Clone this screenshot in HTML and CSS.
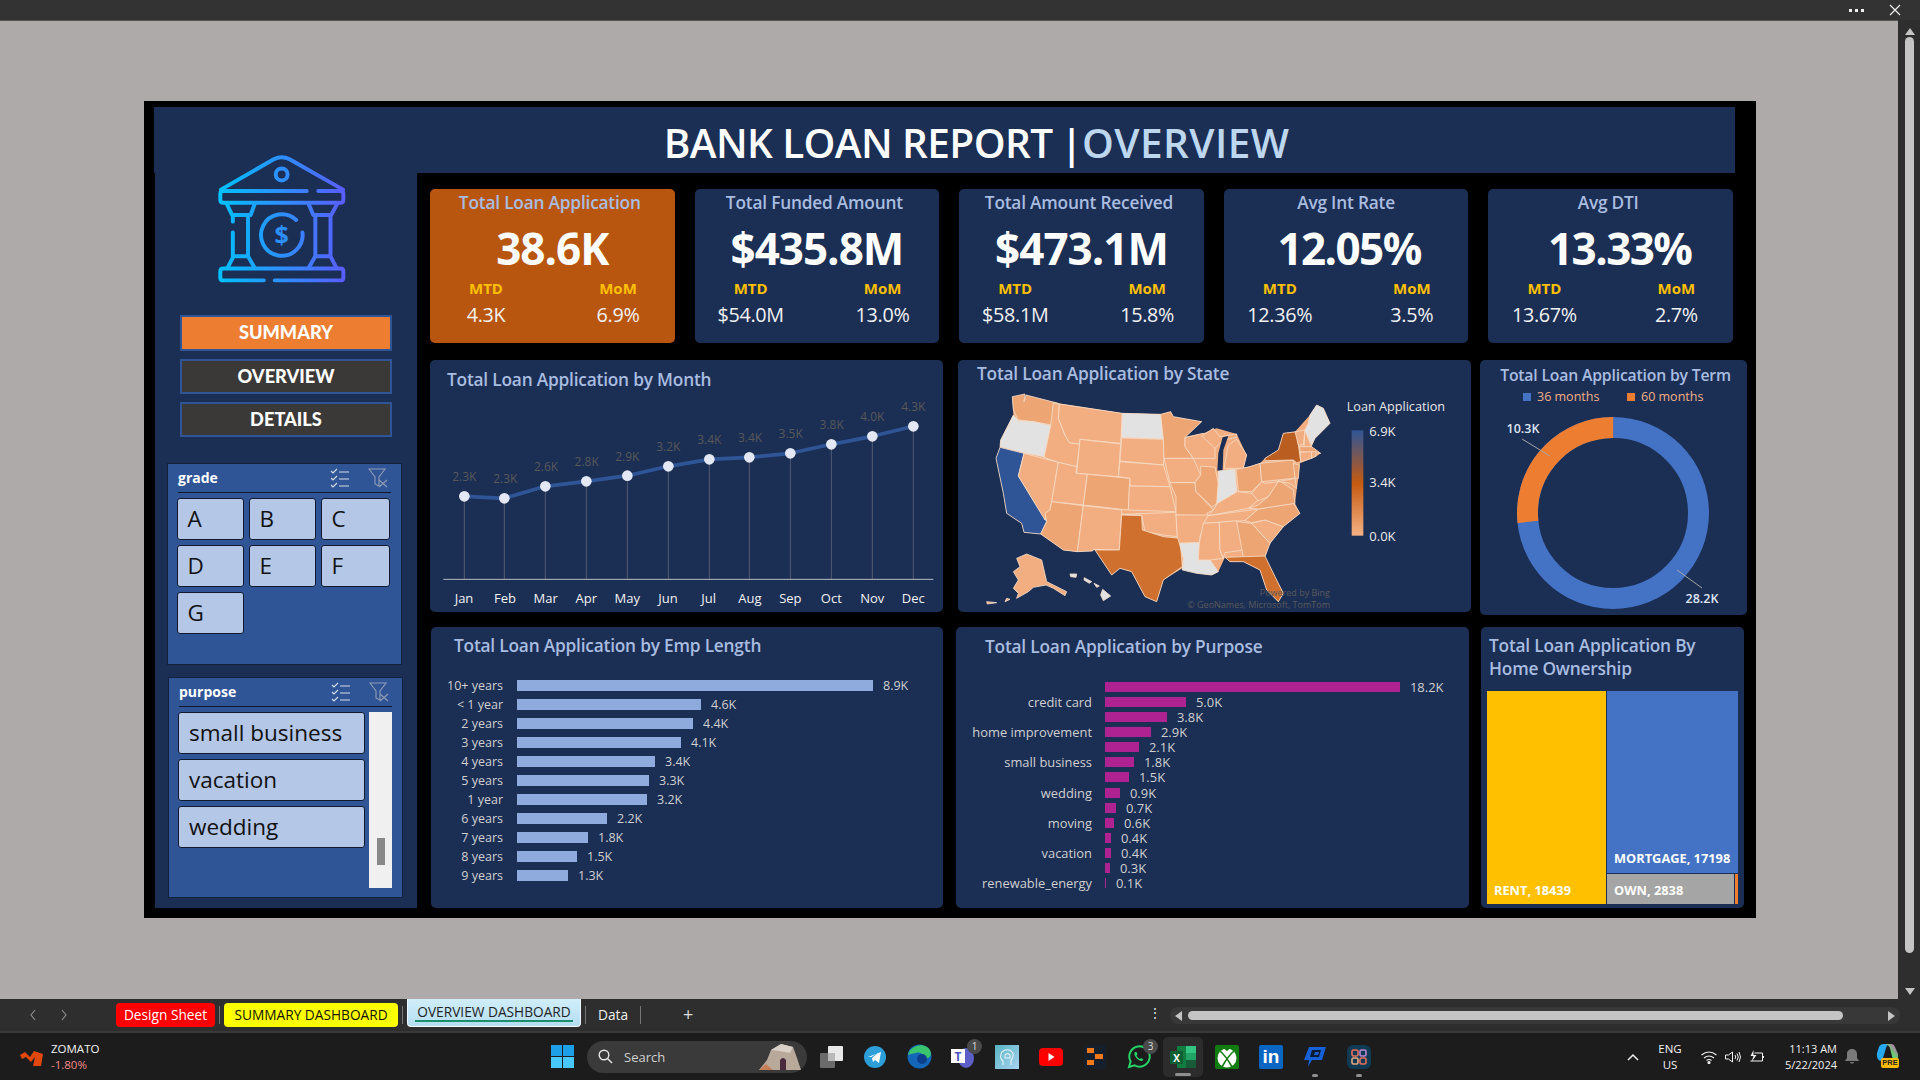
FILE: index.html
```html
<!DOCTYPE html>
<html lang="en">
<head>
  <meta charset="UTF-8">
  <title>Bank Loan Report - Overview</title>
  <link rel="stylesheet" href="styles.css">
</head>
<body>
<div class="app">
  <div class="topbar">
    <span class="dots"><i></i><i></i><i></i></span>
    <svg class="close" width="12" height="12" viewBox="0 0 12 12"><path d="M1 1l10 10M11 1L1 11" stroke="#f0f0f0" stroke-width="1.2"/></svg>
  </div>

  <div class="sheet">
    <div class="canvas">
      <div class="dash">
        <div class="header">BANK LOAN REPORT <span class="pipe">|</span><span class="hl">OVERVIEW</span></div>
        <div class="body">
          <aside class="sidebar">
            <svg class="logo" width="130" height="130" viewBox="228 160 394 394" fill="none" stroke="url(#logoGrad)" stroke-width="12" stroke-linecap="round" stroke-linejoin="round">
              <defs>
                <linearGradient id="logoGrad" gradientUnits="userSpaceOnUse" x1="232" y1="0" x2="618" y2="0">
                  <stop offset="0" stop-color="#00c2ff"/>
                  <stop offset="1" stop-color="#5a5cff"/>
                </linearGradient>
              </defs>
              <path d="M240 268L400 176Q424 164 448 176L610 268"/>
              <circle cx="424" cy="222" r="18"/>
              <path d="M500 272H247q-9 0-9 9v18q0 9 9 9H602q9 0 9-9v-18q0-9-9-9H535"/>
              <path d="M258 312L274 345H330L342 312M276 345V365M276 398V470M322 345V470M278 470L260 505M322 470L342 505M278 470H322"/>
              <path d="M592 312L574 345H520L506 312M572 345V470M526 345V470M572 470L590 505M526 470L506 505M526 470H572"/>
              <path d="M370 543H247q-9 0-9-9v-18q0-9 9-9H602q9 0 9 9v18q0 9-9 9H403"/>
              <path d="M468 360A63 63 0 1 0 487 398"/>
              <text class="logo-dollar" x="424" y="434" text-anchor="middle" stroke="none" fill="url(#logoGrad)">$</text>
            </svg>

            <div class="nav-btn nav-on">SUMMARY</div>
            <div class="nav-btn">OVERVIEW</div>
            <div class="nav-btn">DETAILS</div>

            <div class="slicer slicer-grade">
              <div class="slicer-head">
                <span class="slicer-title">grade</span>
                <svg class="ico-multi" width="20" height="20" viewBox="0 0 20 20" fill="none" stroke="#d5dbe8" stroke-width="1.1"><path d="M1 3l2 2 4-4M1 10l2 2 4-4M1 17l2 2 4-4M9 4h10M9 11h10M9 18h10"/></svg>
                <svg class="ico-filter" width="20" height="20" viewBox="0 0 20 20" fill="none" stroke="#8f9bb3" stroke-width="1.1"><path d="M1 1h16l-6 8v9l-4-2V9z"/><path d="M11 12l8 7M19 12l-8 7"/></svg>
              </div>
              <div class="grade-grid">
                <div class="chip">A</div><div class="chip">B</div><div class="chip">C</div>
                <div class="chip">D</div><div class="chip">E</div><div class="chip">F</div>
                <div class="chip">G</div>
              </div>
            </div>

            <div class="slicer slicer-purpose">
              <div class="slicer-head">
                <span class="slicer-title">purpose</span>
                <svg class="ico-multi" width="20" height="20" viewBox="0 0 20 20" fill="none" stroke="#d5dbe8" stroke-width="1.1"><path d="M1 3l2 2 4-4M1 10l2 2 4-4M1 17l2 2 4-4M9 4h10M9 11h10M9 18h10"/></svg>
                <svg class="ico-filter" width="20" height="20" viewBox="0 0 20 20" fill="none" stroke="#8f9bb3" stroke-width="1.1"><path d="M1 1h16l-6 8v9l-4-2V9z"/><path d="M11 12l8 7M19 12l-8 7"/></svg>
              </div>
              <div class="purpose-list">
                <div class="purpose-items">
                  <div class="chip">small business</div>
                  <div class="chip">vacation</div>
                  <div class="chip">wedding</div>
                </div>
                <div class="slicer-scroll"><div class="slicer-thumb"></div></div>
              </div>
            </div>
          </aside>

          <main class="main">
            <section class="kpis">
              <div class="kpi kpi-on">
                <div class="kpi-title kpi-shift">Total Loan Application</div>
                <div class="kpi-big">38.6K</div>
                <div class="kpi-sub"><b>MTD</b><b>MoM</b><span>4.3K</span><span>6.9%</span></div>
              </div>
              <div class="kpi">
                <div class="kpi-title kpi-shift">Total Funded Amount</div>
                <div class="kpi-big">$435.8M</div>
                <div class="kpi-sub"><b>MTD</b><b>MoM</b><span>$54.0M</span><span>13.0%</span></div>
              </div>
              <div class="kpi">
                <div class="kpi-title kpi-shift">Total Amount Received</div>
                <div class="kpi-big">$473.1M</div>
                <div class="kpi-sub"><b>MTD</b><b>MoM</b><span>$58.1M</span><span>15.8%</span></div>
              </div>
              <div class="kpi">
                <div class="kpi-title">Avg Int Rate</div>
                <div class="kpi-big kpi-big-r">12.05%</div>
                <div class="kpi-sub"><b>MTD</b><b>MoM</b><span>12.36%</span><span>3.5%</span></div>
              </div>
              <div class="kpi">
                <div class="kpi-title kpi-shift">Avg DTI</div>
                <div class="kpi-big kpi-big-rr">13.33%</div>
                <div class="kpi-sub"><b>MTD</b><b>MoM</b><span>13.67%</span><span>2.7%</span></div>
              </div>
            </section>

            <section class="row row-mid">
              <div class="panel panel-month">
                <h3 class="panel-title">Total Loan Application by Month</h3>
                <svg class="line-chart" width="513" height="220" viewBox="0 96 1539 660">
                  <g class="drops">
                    <path d="M103 409V658M223 415V658M346 379V658M469 364V658M592 347V658M715 319V658M838 298V658M958 292V658M1081 280V658M1204 253V658M1327 229V658M1450 199V658"/>
                  </g>
                  <path class="axis" d="M40 658H1510"/>
                  <polyline class="trend" points="103,409 223,415 346,379 469,364 592,347 715,319 838,298 958,292 1081,280 1204,253 1327,229 1450,199"/>
                  <g class="marks">
                    <circle cx="103" cy="409" r="16"/><circle cx="223" cy="415" r="16"/><circle cx="346" cy="379" r="16"/><circle cx="469" cy="364" r="16"/><circle cx="592" cy="347" r="16"/><circle cx="715" cy="319" r="16"/><circle cx="838" cy="298" r="16"/><circle cx="958" cy="292" r="16"/><circle cx="1081" cy="280" r="16"/><circle cx="1204" cy="253" r="16"/><circle cx="1327" cy="229" r="16"/><circle cx="1450" cy="199" r="16"/>
                  </g>
                  <g class="pt-labels">
                    <text x="103" y="364">2.3K</text><text x="226" y="370">2.3K</text><text x="348" y="334">2.6K</text><text x="470" y="319">2.8K</text><text x="592" y="304">2.9K</text><text x="715" y="274">3.2K</text><text x="838" y="253">3.4K</text><text x="960" y="247">3.4K</text><text x="1082" y="235">3.5K</text><text x="1205" y="208">3.8K</text><text x="1327" y="184">4.0K</text><text x="1450" y="154">4.3K</text>
                  </g>
                  <g class="months">
                    <text x="102" y="728">Jan</text><text x="225" y="728">Feb</text><text x="347" y="728">Mar</text><text x="469" y="728">Apr</text><text x="592" y="728">May</text><text x="714" y="728">Jun</text><text x="836" y="728">Jul</text><text x="960" y="728">Aug</text><text x="1081" y="728">Sep</text><text x="1204" y="728">Oct</text><text x="1327" y="728">Nov</text><text x="1450" y="728">Dec</text>
                  </g>
                </svg>
              </div>

              <div class="panel panel-map">
                <h3 class="panel-title">Total Loan Application by State</h3>
                <svg class="map" width="512" height="226" viewBox="24 108 1536 678">
                  <defs>
                    <linearGradient id="legendGrad" x1="0" y1="0" x2="0" y2="1">
                      <stop offset="0" stop-color="#2f5597"/>
                      <stop offset="0.5" stop-color="#c55a11"/>
                      <stop offset="1" stop-color="#f4b183"/>
                    </linearGradient>
                  </defs>
                  <polygon class="st-a" points="187,140 325,160 517,190 632,193 662,185 670,200 755,215 705,262 760,250 800,235 860,252 890,315 880,355 930,340 945,325 985,300 1000,250 1035,245 1080,195 1100,165 1120,175 1140,220 1095,265 1085,290 1112,310 1098,320 1050,340 1045,385 1040,420 1035,460 1050,490 1000,530 960,580 945,620 975,680 1000,730 985,755 950,720 930,660 880,635 840,635 825,622 805,665 785,675 740,670 697,655 640,690 620,755 585,740 545,665 510,655 485,675 435,600 382,605 340,600 272,552 222,547 215,520 170,490 160,430 138,325 150,290 152,270 190,195"/>
                  <g class="states">
                    <polygon class="st-b" points="187,140 225,132 222,155 228,135 325,160 305,225 250,215 205,210 190,180"/>
                    <polygon class="st-n" points="190,195 205,212 250,215 305,228 282,320 220,308 150,290 152,270"/>
                    <polygon class="st-ca" points="150,292 222,310 205,378 290,515 272,552 222,547 215,520 170,490 160,430 138,325"/>
                    <polygon class="st-a" points="222,310 325,337 305,455 300,480 288,490 285,510 205,378"/>
                    <polygon class="st-a" points="310,158 328,162 325,205 345,255 358,278 390,282 380,350 325,337 282,322 302,228"/>
                    <polygon class="st-a" points="328,162 517,190 512,280 390,268 388,282 358,278 345,255 325,205"/>
                    <polygon class="st-a" points="390,268 512,282 505,380 380,370"/>
                    <polygon class="st-a" points="325,337 380,350 378,370 412,373 400,465 305,455"/>
                    <polygon class="st-b" points="412,373 540,385 535,480 400,465"/>
                    <polygon class="st-b" points="305,455 400,467 382,605 340,600 272,552 290,515 285,490 300,480"/>
                    <polygon class="st-a" points="400,467 515,480 508,600 430,598 428,603 382,605"/>
                    <polygon class="st-n" points="517,190 632,193 640,267 515,262"/>
                    <polygon class="st-a" points="515,264 640,268 642,325 640,345 510,333"/>
                    <polygon class="st-a" points="510,335 640,345 660,410 540,408 540,385 505,380"/>
                    <polygon class="st-a" points="538,408 660,410 678,485 535,480"/>
                    <polygon class="st-a" points="515,493 678,487 682,560 640,555 585,545 575,495"/>
                    <polygon class="st-tx" points="515,495 575,497 577,540 640,560 690,565 697,650 640,690 620,755 585,740 545,665 510,655 485,675 435,600 508,600"/>
                    <polygon class="st-b" points="632,193 662,185 670,200 755,215 705,262 705,290 730,325 642,325 640,267"/>
                    <polygon class="st-a" points="642,325 730,325 752,375 735,398 660,398"/>
                    <polygon class="st-b" points="660,398 735,398 738,425 790,480 770,490 775,497 678,495 678,440"/>
                    <polygon class="st-a" points="678,495 775,495 750,560 748,578 688,580 682,560"/>
                    <polygon class="st-n" points="688,580 748,578 745,630 780,630 805,665 785,675 740,670 697,660 700,625"/>
                    <polygon class="st-a" points="705,262 760,250 795,280 795,325 730,325 705,290"/>
                    <polygon class="st-b" points="752,348 795,352 805,400 802,460 785,470 738,425 735,398 752,375"/>
                    <polygon class="st-n" points="805,362 855,358 860,425 800,462 805,400"/>
                    <polygon class="st-a" points="822,355 835,285 860,268 890,315 880,355"/>
                    <polygon class="st-a" points="755,258 790,235 810,260 860,252 860,262 820,270 795,295"/>
                    <polygon class="st-b" points="858,358 900,350 930,340 935,395 905,425 865,425"/>
                    <polygon class="st-a" points="802,460 862,425 905,430 925,450 895,475 775,497 790,480"/>
                    <polygon class="st-a" points="775,497 925,477 910,490 885,512 760,520"/>
                    <polygon class="st-a" points="760,520 808,517 810,600 820,625 780,630 745,630 748,578"/>
                    <polygon class="st-a" points="808,517 860,512 880,600 825,608 820,625 810,600"/>
                    <polygon class="st-b" points="860,514 885,518 905,520 960,580 945,620 880,622"/>
                    <polygon class="st-tx" points="825,622 945,618 975,680 1000,730 985,755 950,720 930,660 880,635 840,635"/>
                    <polygon class="st-a" points="905,520 945,510 1000,530 960,580"/>
                    <polygon class="st-b" points="885,512 925,477 1030,460 1050,490 1000,530 945,510 905,518"/>
                    <polygon class="st-b" points="895,475 925,465 955,440 985,390 1030,420 1035,460 925,477"/>
                    <polygon class="st-a" points="905,430 935,395 945,400 985,395 955,440 925,452"/>
                    <polygon class="st-b" points="930,340 1030,330 1040,375 1030,385 935,395"/>
                    <polygon class="st-ny" points="945,325 985,300 1000,250 1040,245 1052,335 1040,338 1030,330 945,332"/>
                    <polygon class="st-b" points="1030,340 1048,345 1045,385 1035,385"/>
                    <polygon class="st-a" points="985,395 1035,385 1040,415 1020,400"/>
                    <polygon class="st-a" points="1035,245 1065,240 1060,285 1045,285"/>
                    <polygon class="st-a" points="1065,240 1080,280 1085,290 1062,295"/>
                    <polygon class="st-n" points="1080,195 1100,165 1120,175 1140,220 1095,265 1085,285 1065,240 1075,220"/>
                    <polygon class="st-b" points="1048,290 1085,290 1112,310 1050,305"/>
                    <polygon class="st-a" points="1050,307 1085,305 1085,325 1052,335"/>
                    <polygon class="st-a" points="1085,305 1098,305 1098,318 1085,325"/>
                    <polygon class="st-a" points="200,625 230,612 275,630 290,695 310,705 350,725 345,737 310,715 288,705 250,712 235,725 200,745 205,730 190,715 205,690 190,665 210,650"/>
                    <polygon class="st-a" points="170,745 180,748 165,755"/>
                    <polygon class="st-a" points="110,755 140,758 112,762"/>
                    <polygon class="st-n" points="360,672 380,672 378,682 362,680"/>
                    <polygon class="st-n" points="403,683 425,695 418,700 402,690"/>
                    <polygon class="st-n" points="432,700 448,708 440,712"/>
                    <polygon class="st-n" points="458,718 482,738 460,752 452,735"/>
                  </g>
                  <polygon class="lake" points="818,262 835,258 820,300 818,360 802,362 805,310"/>
                  <text class="map-credit" x="1140" y="738">Powered by Bing</text>
                  <text class="map-credit" x="1140" y="773">© GeoNames, Microsoft, TomTom</text>
                  <text class="legend-title" x="1190" y="184">Loan Application</text>
                  <rect x="1205" y="241" width="35" height="316" fill="url(#legendGrad)"/>
                  <text class="legend-val" x="1258" y="258">6.9K</text>
                  <text class="legend-val" x="1258" y="412">3.4K</text>
                  <text class="legend-val" x="1258" y="572">0.0K</text>
                </svg>
              </div>

              <div class="panel panel-term">
                <h3 class="panel-title">Total Loan Application by Term</h3>
                <div class="term-legend">
                  <span class="term-key"><i class="sq-blue"></i>36 months</span>
                  <span class="term-key"><i class="sq-orange"></i>60 months</span>
                </div>
                <svg class="donut" width="267" height="209" viewBox="0 46 267 209">
                  <circle cx="133" cy="153" r="85.5" fill="none" stroke="#4472c4" stroke-width="21"/>
                  <circle cx="133" cy="153" r="85.5" fill="none" stroke="#ed7d31" stroke-width="21" stroke-dasharray="143.3 537.2" transform="rotate(174 133 153)"/>
                  <path class="leader" d="M42 79L70 96M197 210L222 228"/>
                  <text class="donut-val" x="43" y="73">10.3K</text>
                  <text class="donut-val" x="222" y="243">28.2K</text>
                </svg>
              </div>
            </section>

            <section class="row row-low">
              <div class="panel panel-emp">
                <h3 class="panel-title">Total Loan Application by Emp Length</h3>
                <div class="bars bars-emp">
                  <div class="bar-row"><span class="bar-name">10+ years</span><i class="bar" style="width:356px"></i><span class="bar-val">8.9K</span></div>
                  <div class="bar-row"><span class="bar-name">&lt; 1 year</span><i class="bar" style="width:184px"></i><span class="bar-val">4.6K</span></div>
                  <div class="bar-row"><span class="bar-name">2 years</span><i class="bar" style="width:176px"></i><span class="bar-val">4.4K</span></div>
                  <div class="bar-row"><span class="bar-name">3 years</span><i class="bar" style="width:164px"></i><span class="bar-val">4.1K</span></div>
                  <div class="bar-row"><span class="bar-name">4 years</span><i class="bar" style="width:138px"></i><span class="bar-val">3.4K</span></div>
                  <div class="bar-row"><span class="bar-name">5 years</span><i class="bar" style="width:132px"></i><span class="bar-val">3.3K</span></div>
                  <div class="bar-row"><span class="bar-name">1 year</span><i class="bar" style="width:130px"></i><span class="bar-val">3.2K</span></div>
                  <div class="bar-row"><span class="bar-name">6 years</span><i class="bar" style="width:90px"></i><span class="bar-val">2.2K</span></div>
                  <div class="bar-row"><span class="bar-name">7 years</span><i class="bar" style="width:71px"></i><span class="bar-val">1.8K</span></div>
                  <div class="bar-row"><span class="bar-name">8 years</span><i class="bar" style="width:60px"></i><span class="bar-val">1.5K</span></div>
                  <div class="bar-row"><span class="bar-name">9 years</span><i class="bar" style="width:51px"></i><span class="bar-val">1.3K</span></div>
                </div>
              </div>

              <div class="panel panel-purpose">
                <h3 class="panel-title">Total Loan Application by Purpose</h3>
                <div class="bars bars-purpose">
                  <div class="bar-row"><span class="bar-name"></span><i class="bar" style="width:295px"></i><span class="bar-val">18.2K</span></div>
                  <div class="bar-row"><span class="bar-name">credit card</span><i class="bar" style="width:81px"></i><span class="bar-val">5.0K</span></div>
                  <div class="bar-row"><span class="bar-name"></span><i class="bar" style="width:62px"></i><span class="bar-val">3.8K</span></div>
                  <div class="bar-row"><span class="bar-name">home improvement</span><i class="bar" style="width:46px"></i><span class="bar-val">2.9K</span></div>
                  <div class="bar-row"><span class="bar-name"></span><i class="bar" style="width:34px"></i><span class="bar-val">2.1K</span></div>
                  <div class="bar-row"><span class="bar-name">small business</span><i class="bar" style="width:29px"></i><span class="bar-val">1.8K</span></div>
                  <div class="bar-row"><span class="bar-name"></span><i class="bar" style="width:24px"></i><span class="bar-val">1.5K</span></div>
                  <div class="bar-row"><span class="bar-name">wedding</span><i class="bar" style="width:15px"></i><span class="bar-val">0.9K</span></div>
                  <div class="bar-row"><span class="bar-name"></span><i class="bar" style="width:11px"></i><span class="bar-val">0.7K</span></div>
                  <div class="bar-row"><span class="bar-name">moving</span><i class="bar" style="width:9px"></i><span class="bar-val">0.6K</span></div>
                  <div class="bar-row"><span class="bar-name"></span><i class="bar" style="width:6px"></i><span class="bar-val">0.4K</span></div>
                  <div class="bar-row"><span class="bar-name">vacation</span><i class="bar" style="width:6px"></i><span class="bar-val">0.4K</span></div>
                  <div class="bar-row"><span class="bar-name"></span><i class="bar" style="width:5px"></i><span class="bar-val">0.3K</span></div>
                  <div class="bar-row"><span class="bar-name">renewable_energy</span><i class="bar" style="width:1px"></i><span class="bar-val">0.1K</span></div>
                </div>
              </div>

              <div class="panel panel-home">
                <h3 class="panel-title">Total Loan Application By<br>Home Ownership</h3>
                <div class="treemap">
                  <div class="tm-rent"><span>RENT, 18439</span></div>
                  <div class="tm-right">
                    <div class="tm-mortgage"><span>MORTGAGE, 17198</span></div>
                    <div class="tm-bottom">
                      <div class="tm-own"><span>OWN, 2838</span></div>
                      <div class="tm-other"></div>
                    </div>
                  </div>
                </div>
              </div>
            </section>
          </main>
        </div>
      </div>
    </div>

    <div class="vscroll">
      <span class="arrow-up"></span>
      <div class="vthumb"></div>
      <span class="arrow-down"></span>
    </div>
  </div>

  <div class="sheetbar">
    <svg class="tab-nav" width="90" height="24" viewBox="0 0 90 24" fill="none" stroke="#8a8a8a" stroke-width="1.2"><path d="M35 7l-4 5 4 5M62 7l4 5-4 5"/></svg>
    <div class="tab tab-red">Design Sheet</div>
    <span class="tab-sep"></span>
    <div class="tab tab-yellow">SUMMARY DASHBOARD</div>
    <span class="tab-sep"></span>
    <div class="tab tab-active">OVERVIEW DASHBOARD</div>
    <span class="tab-sep"></span>
    <div class="tab tab-plain">Data</div>
    <span class="tab-sep"></span>
    <div class="tab-plus">+</div>
    <div class="tab-more">⋮</div>
    <div class="hscroll">
      <span class="arrow-left"></span>
      <div class="hthumb"></div>
      <span class="arrow-right"></span>
    </div>
  </div>

  <div class="taskbar">
    <div class="stock">
      <svg width="24" height="20" viewBox="0 0 24 20"><path d="M0 8l5-3 5 5 4-6 9 3-2 12-8 0 2-9-4 5-5-5-4 2z" fill="#e2470c"/></svg>
      <div class="stock-text"><span>ZOMATO</span><span class="stock-down">-1.80%</span></div>
    </div>
    <div class="slot">
      <svg width="23" height="23" viewBox="0 0 23 23"><path fill="#1ea0e8" d="M0 0h11v11H0zM12 0h11v11H12z"/><path fill="#47c8f8" d="M0 12h11v11H0zM12 12h11v11H12z"/></svg>
    </div>
    <div class="search">
      <svg width="15" height="15" viewBox="0 0 15 15" fill="none" stroke="#e6e6e6" stroke-width="1.4"><circle cx="6" cy="6" r="4.8"/><path d="M9.5 9.5L14 14"/></svg>
      <span>Search</span>
      <svg class="search-art" width="44" height="30" viewBox="0 0 44 30"><path d="M2 28L10 18 14 8 24 2 36 5 40 16 44 28z" fill="#b9a99a"/><path d="M23 28V18q3-4 6 0V28z" fill="#4a2b3d"/><path d="M14 8L24 2 36 5 33 11 22 9z" fill="#d8cfc6"/><path d="M2 28L9 22 16 28z" fill="#c57f57"/></svg>
    </div>
    <div class="apps">
      <div class="slot"><svg width="24" height="24" viewBox="0 0 24 24"><rect x="9" y="1" width="15" height="15" rx="1" fill="#e8e8e8"/><rect x="1" y="8" width="15" height="15" rx="1" fill="#6b6b6b"/><rect x="9" y="8" width="7" height="8" fill="#b9b9b9"/></svg></div>
      <div class="slot"><svg width="22" height="22" viewBox="0 0 22 22"><circle cx="11" cy="11" r="11" fill="#2c9fd8"/><path d="M4 11l13-5-2 11-4-3-2 2-1-4 6-5-7 4z" fill="#fff"/></svg></div>
      <div class="slot"><svg width="25" height="25" viewBox="0 0 25 25"><circle cx="12.5" cy="12.5" r="12" fill="#1466b8"/><path d="M1 11C3 2 14-1 20 3c5 3 5 10 1 11-3 1-6 0-6-3 0-2-3-3-6-2-4 1-7 1-8 2z" fill="#39c46e"/><circle cx="15" cy="15" r="5" fill="#0e3f8c"/></svg></div>
      <div class="slot"><svg width="26" height="24" viewBox="0 0 26 24"><ellipse cx="16" cy="13" rx="8" ry="10" fill="#5b5fc7"/><rect x="1" y="4" width="14" height="14" fill="#fff"/><text class="icon-t" x="8" y="15.5">T</text></svg><span class="badge">1</span></div>
      <div class="slot"><svg width="24" height="24" viewBox="0 0 24 24"><defs><linearGradient id="appGrad" x1="0" y1="0" x2="1" y2="1"><stop offset="0" stop-color="#58b3c4"/><stop offset="1" stop-color="#a8d3f0"/></linearGradient></defs><rect width="24" height="24" fill="url(#appGrad)"/><path d="M8 20v-4c-3-2-3-6-1-9 3-3 8-3 10 0 2 3 1 6-1 8v5M10 10a3 3 0 0 1 5 0v3h-5z" fill="none" stroke="#e8f5fb" stroke-width="1.1"/></svg></div>
      <div class="slot"><svg width="24" height="18" viewBox="0 0 24 18"><rect width="24" height="18" rx="4" fill="#f00"/><path d="M9.5 5l6 4-6 4z" fill="#fff"/></svg></div>
      <div class="slot"><svg width="22" height="24" viewBox="0 0 22 24"><rect width="22" height="24" rx="3" fill="#16202c"/><path d="M3 3h7v5H3zM11 9h8v5h-8zM3 15h7v5H3z" fill="#f07a1a"/></svg></div>
      <div class="slot"><svg width="24" height="24" viewBox="0 0 24 24" fill="none"><path d="M2 22l1.6-5.6A10.2 10.2 0 1 1 7.6 20.4z" stroke="#25d366" stroke-width="2"/><path d="M8 7c-1 1-1 3 1 5.5s4.500 4 6 3.500l1.500-1.500-2.500-1.500-1 1c-1.500-.5-2.500-1.500-3.500-3.500l1-1-1-2.500z" fill="#25d366"/></svg><span class="badge">3</span></div>
      <div class="slot slot-on"><svg width="26" height="24" viewBox="0 0 26 24"><rect x="7" y="1" width="19" height="22" rx="1" fill="#107c41"/><rect x="16" y="1" width="10" height="7" fill="#33c481"/><rect x="16" y="8" width="10" height="7" fill="#21a366"/><rect x="16" y="15" width="10" height="8" fill="#185c37"/><rect y="6" width="13" height="13" rx="1" fill="#0c5f33"/><text class="icon-x" x="6.500" y="16.500">X</text></svg><i class="running"></i></div>
      <div class="slot"><svg width="24" height="24" viewBox="0 0 24 24"><rect width="24" height="24" rx="2" fill="#107c10"/><circle cx="12" cy="13" r="9.500" fill="#fff"/><path d="M5 6Q11 11 17 22M19 6Q13 11 7 22" fill="none" stroke="#107c10" stroke-width="1.600"/><path d="M7 2L12 6 17 2z" fill="#107c10"/></svg></div>
      <div class="slot"><div class="linkedin">in</div></div>
      <div class="slot"><svg width="24" height="22" viewBox="0 0 24 22"><path d="M6 1h17l-4 13H9l-4 7 1-7H1z" fill="#1660d8"/><path d="M9 4h9l-2 7H7z" fill="#0a1a33"/><path d="M12 6h4l-1 3h-4z" fill="#1660d8"/></svg><i class="running-dot"></i></div>
      <div class="slot"><svg width="24" height="24" viewBox="0 0 24 24" fill="none" stroke-width="1.600"><rect width="24" height="24" rx="6" fill="#0f3a52"/><rect x="5" y="5" width="6" height="6" rx="1.500" stroke="#e96f5c"/><rect x="13" y="5" width="6" height="6" rx="1.500" stroke="#b88ad8"/><rect x="5" y="13" width="6" height="6" rx="1.500" stroke="#e6a884"/><rect x="13" y="13" width="6" height="6" rx="1.500" stroke="#e96f5c"/></svg><i class="running-dot"></i></div>
    </div>
    <div class="tray">
      <svg class="tray-chev" width="12" height="8" viewBox="0 0 12 8" fill="none" stroke="#f0f0f0" stroke-width="1.500"><path d="M1 7l5-5 5 5"/></svg>
      <div class="tray-lang"><span>ENG</span><span>US</span></div>
      <svg class="tray-ico tray-first" width="17" height="14" viewBox="0 0 17 14" fill="none" stroke="#f0f0f0" stroke-width="1.200"><path d="M1 5q7.500-6 15 0M3.500 8q5-4 10 0M6 10.500q2.500-2 5 0"/><circle cx="8.500" cy="12.500" r="1" fill="#f0f0f0"/></svg>
      <svg class="tray-ico" width="17" height="14" viewBox="0 0 17 14" fill="none" stroke="#f0f0f0" stroke-width="1"><path d="M1 5h3l4-3v10l-4-3H1zM10.500 5q1.500 2 0 4M12.500 3.500q2.500 3.500 0 7M14.500 2q3 5 0 10"/></svg>
      <svg class="tray-ico" width="17" height="14" viewBox="0 0 17 14" fill="none" stroke="#f0f0f0" stroke-width="1"><path d="M6 3h8v8H2M15 6v2"/><path d="M5 0L2 6h3L3 12l5-7H5z" fill="#f0f0f0" stroke="none"/></svg>
      <div class="tray-clock"><span>11:13 AM</span><span>5/22/2024</span></div>
      <svg class="tray-bell" width="14" height="16" viewBox="0 0 14 16"><path d="M7 0c3 0 5 2 5 5v4l2 3H0l2-3V5c0-3 2-5 5-5zM5 13h4c0 2-4 2-4 0z" fill="#7a7a7a"/></svg>
      <div class="copilot">
        <svg width="23" height="18" viewBox="0 0 23 18"><defs><linearGradient id="copGrad" x1="0" y1="1" x2="1" y2="0"><stop offset="0" stop-color="#2cc3ef"/><stop offset=".5" stop-color="#6ad06b"/><stop offset="1" stop-color="#d14fd6"/></linearGradient></defs><path d="M4 17Q0 14 1 9L3 3Q4 0 8 0H15Q11 0 10 4L7 14Q6 17 4 17z" fill="#27a9f0"/><path d="M8 0H15Q18 0 19 3L22 10Q23 16 18 17H13Q18 17 16 12L14 4Q12 0 8 0z" fill="url(#copGrad)"/></svg>
        <span class="pre">PRE</span>
      </div>
    </div>
  </div>
</div>
</body>
</html>
```

FILE: styles.css
```css
* { box-sizing: border-box; }
html, body { margin: 0; padding: 0; }
body { width: 1920px; height: 1080px; overflow: hidden; font-family: "Open Sans", "Noto Sans", sans-serif; background: #2e2e2e; }
.app { display: flex; flex-direction: column; height: 1080px; }

/* window chrome */
.topbar { height: 20px; background: #333; display: flex; align-items: center; justify-content: flex-end; padding-right: 19px; }
.dots { display: flex; gap: 3px; margin-right: 25px; }
.dots i { width: 3px; height: 3px; background: #f0f0f0; }

.sheet { height: 979px; display: flex; background: #2e2e2e; }
.canvas { width: 1898px; background: #aeaaaa; padding: 81px 0 0 144px; box-shadow: inset 0 1px #555; }
.vscroll { flex: 1; position: relative; }
.vthumb { position: absolute; left: 7px; top: 17px; width: 9px; height: 916px; background: #c4c4c4; border-radius: 5px; }
.arrow-up, .arrow-down { position: absolute; left: 7px; width: 0; height: 0; border-left: 5px solid transparent; border-right: 5px solid transparent; }
.arrow-up { top: 8px; border-bottom: 7px solid #c4c4c4; }
.arrow-down { top: 968px; border-top: 7px solid #c4c4c4; }

/* dashboard frame */
.dash { width: 1612px; height: 817px; background: #000; padding: 6px 0 0 10px; }
.header { width: 1581px; height: 66px; background: #1b2e54; color: #fff; font-size: 40.500px; font-weight: 600; line-height: 72px; text-align: center; letter-spacing: -.6px; padding-left: 64px; white-space: nowrap; }
.pipe { margin-left: -2px; }
.hl { color: #bdd7ee; letter-spacing: .4px; }
.body { display: flex; }

/* left column */
.sidebar { width: 262px; height: 735px; margin-left: 1px; background: #1b2e54; flex: none; display: flex; flex-direction: column; }
.logo { margin: -19px 0 0 62px; display: block; flex: none; }
.logo-dollar { font: 700 76px "Open Sans", sans-serif; }
.nav-btn { width: 212px; height: 35px; margin: 8px 0 0 25px; background: #3b3838; border: 2px solid #2f5597; color: #fff; font: 900 18.200px/31px "Lato", sans-serif; text-align: center; flex: none; }
.nav-on { height: 36px; margin-top: 31px; background: #ed7d31; }
.slicer { background: #2f5597; border: 1px solid #14213d; flex: none; }
.slicer-grade { width: 235px; height: 202px; margin: 26px 0 0 12px; }
.slicer-purpose { width: 235px; height: 221px; margin: 12px 0 0 13px; }
.slicer-head { height: 29px; margin: 0 10px; border-bottom: 1px solid #10192e; display: flex; align-items: center; position: relative; }
.slicer-title { color: #fff; font-size: 14px; font-weight: 700; line-height: 28px; }
.ico-multi { position: absolute; left: 152px; top: 4px; }
.ico-filter { position: absolute; left: 190px; top: 4px; }
.chip { background: #b4c7e7; border: 1px solid #10192e; border-radius: 3px; height: 42px; color: #111; font-size: 22.500px; line-height: 40px; padding-left: 10px; }
.grade-grid { display: grid; grid-template-columns: 67.500px 67.500px 69px; column-gap: 4.500px; row-gap: 5px; padding: 5px 0 0 8.500px; }
.purpose-list { display: flex; padding: 5px 0 0 9px; }
.purpose-items { width: 187px; display: flex; flex-direction: column; gap: 5px; }
.slicer-scroll { width: 23px; height: 176px; margin-left: 4px; background: #f0f0f0; position: relative; }
.slicer-thumb { position: absolute; left: 8px; top: 126px; width: 8px; height: 27px; background: #888; }

/* main column */
.main { width: 1330px; padding: 16px 0 0 13px; flex: none; }
.kpis { display: grid; grid-template-columns: repeat(5, 244.600px); column-gap: 20px; height: 154px; }
.kpi { background: #1b2e54; border-radius: 5px; padding-top: 2px; text-align: center; }
.kpi-on { background: #b8560f; }
.kpi-title { color: #a9bde0; font-size: 17.300px; font-weight: 600; line-height: 24px; letter-spacing: -.2px; white-space: nowrap; }
.kpi-shift { padding-right: 5px; }
.kpi-big { color: #fff; font-size: 44px; font-weight: 700; line-height: 50px; margin-top: 8px; letter-spacing: -1px; }
.kpi-big-r { padding-left: 6px; letter-spacing: -1.600px; }
.kpi-big-rr { padding-left: 18px; letter-spacing: -1.600px; }
.kpi-sub { display: grid; grid-template-columns: 110px 110px; column-gap: 22px; margin-top: 5px; padding-left: 1px; }
.kpi-sub b { color: #ffc000; font-size: 15px; font-weight: 700; line-height: 20px; }
.kpi-sub span { color: #f2f2f2; font-size: 19.800px; line-height: 24px; margin-top: 5px; letter-spacing: -.3px; }

.row { display: flex; align-items: flex-start; }
.row-mid { margin-top: 17px; }
.row-low { margin-top: 12px; margin-left: 1px; }
.panel { background: #1b2e54; border-radius: 5px; flex: none; }
.panel-title { margin: 0; color: #a9bde0; font-size: 17.300px; font-weight: 600; line-height: 24px; letter-spacing: -.2px; white-space: nowrap; }
.panel-month { width: 513px; height: 252px; margin-right: 15px; padding-top: 8px; }
.panel-month .panel-title { padding-left: 17px; }
.panel-map { width: 513px; height: 252px; margin-right: 9px; padding-top: 2px; }
.panel-map .panel-title { padding-left: 19px; }
.panel-term { width: 267px; height: 255px; padding-top: 3px; }
.panel-term .panel-title { padding-left: 4px; text-align: center; font-size: 15.800px; }
.panel-emp { width: 512px; height: 281px; margin-right: 13px; padding-top: 7px; }
.panel-emp .panel-title { padding-left: 23px; }
.panel-purpose { width: 513px; height: 281px; margin-right: 12px; padding-top: 8px; }
.panel-purpose .panel-title { padding-left: 29px; }
.panel-home { width: 263px; height: 281px; padding-top: 7px; }
.panel-home .panel-title { padding-left: 8px; line-height: 23px; }

/* chart bits */
.line-chart, .map, .donut { display: block; }
.drops path { stroke: #5f6677; stroke-width: 2.500; fill: none; }
.axis { stroke: #d9d9d9; stroke-width: 2.500; }
.trend { fill: none; stroke: #2f5597; stroke-width: 11; stroke-linejoin: round; }
.marks circle { fill: #e3e8f4; }
.pt-labels text { fill: #595959; font-size: 36px; text-anchor: middle; }
.months text { fill: #f2f2f2; font-size: 39px; text-anchor: middle; }

.states polygon { stroke: #f5dcc8; stroke-width: 2.500; stroke-linejoin: round; }
.st-a { fill: #f2ae80; }
.st-b { fill: #eda574; }
.st-n { fill: #e2e2e2; }
.st-ca { fill: #2f5597; }
.st-tx { fill: #cf702e; }
.st-ny { fill: #b95d20; }
.lake { fill: #1b2e54; }
.map-credit { fill: #5a5a5a; font-size: 27px; text-anchor: end; }
.legend-title { fill: #e6e6e6; font-size: 38px; }
.legend-val { fill: #eaeaea; font-size: 39px; }

.term-legend { display: flex; justify-content: flex-start; height: 19px; padding-left: 43px; gap: 25px; font-size: 12.500px; line-height: 18px; color: #f4b183; }
.term-key { display: flex; align-items: center; gap: 6px; width: 79px; white-space: nowrap; }
.term-key i { width: 8px; height: 8px; }
.sq-blue { background: #4472c4; }
.sq-orange { background: #ed7d31; }
.leader { stroke: #a6a6a6; stroke-width: 1; fill: none; }
.donut-val { fill: #dfe5f2; font-size: 12.500px; font-weight: 600; text-anchor: middle; }

.bars-emp { margin-top: 18px; }
.bars-purpose { margin-top: 20px; }
.bar-row { display: flex; align-items: center; font-size: 12.500px; color: #d0d0d0; white-space: nowrap; }
.bar-name { text-align: right; }
.bars-emp .bar-row { height: 19px; }
.bars-emp .bar-name { width: 72px; margin-right: 14px; }
.bars-emp .bar { height: 11px; background: #8faadc; margin-right: 10px; }
.bars-purpose .bar-row { height: 15.150px; font-size: 12.900px; }
.bars-purpose .bar-name { width: 136px; margin-right: 13px; }
.bars-purpose .bar { height: 10px; background: #ae2391; margin-right: 10px; }

.treemap { display: flex; margin: 11px 0 0 6px; width: 251px; height: 213px; font-size: 12.800px; font-weight: 700; color: #fff; }
.treemap span { white-space: nowrap; }
.tm-rent { width: 119px; background: #ffc000; padding: 0 0 5px 7px; display: flex; align-items: flex-end; margin-right: 1px; }
.tm-right { width: 131px; display: flex; flex-direction: column; }
.tm-mortgage { height: 182px; background: #4472c4; padding: 0 0 6px 7px; display: flex; align-items: flex-end; margin-bottom: 1px; }
.tm-bottom { flex: 1; display: flex; }
.tm-own { width: 127px; background: #a5a5a5; padding: 0 0 5px 7px; display: flex; align-items: flex-end; margin-right: 1px; }
.tm-other { flex: 1; background: #ed7d31; }

/* sheet tabs */
.sheetbar { height: 34px; background: #2e2e2e; border-bottom: 2px solid #3a3a3a; display: flex; align-items: flex-start; padding-top: 4px; font-size: 13.700px; position: relative; }
.tab-nav { margin: 0 26px 0 0; width: 90px; }
.tab { height: 24px; line-height: 23px; text-align: center; white-space: nowrap; flex: none; }
.tab-red { width: 99px; background: #f00; color: #fff; border-radius: 4px; }
.tab-yellow { width: 174px; background: #ff0; color: #111; border-radius: 4px; }
.tab-active { width: 174px; height: 28px; margin-top: -4px; line-height: 25px; color: #222; background: linear-gradient(#d0eefa, #b5def2); border: 1px solid #f0f8fc; border-top: 0; border-radius: 0 0 4px 4px; position: relative; }
.tab-active::after { content: ""; position: absolute; left: 7px; right: 7px; bottom: 4px; height: 2px; background: #1b8f6b; }
.tab-plain { width: 46px; color: #f2f2f2; }
.tab-sep { width: 1px; height: 18px; background: #777; margin: 3px 4px 0; flex: none; }
.tab-plus { color: #ddd; font-size: 18px; line-height: 22px; margin-left: 38px; }
.tab-more { position: absolute; left: 1148px; top: 3px; color: #ddd; font-size: 14px; line-height: 22px; }
.hscroll { position: absolute; left: 1170px; top: 8px; width: 730px; height: 17px; background: #383838; border-radius: 8px; }
.hthumb { position: absolute; left: 18px; top: 4px; width: 655px; height: 9px; background: #c4c4c4; border-radius: 5px; }
.arrow-left, .arrow-right { position: absolute; top: 4px; width: 0; height: 0; border-top: 5px solid transparent; border-bottom: 5px solid transparent; }
.arrow-left { left: 5px; border-right: 7px solid #c4c4c4; }
.arrow-right { left: 718px; border-left: 7px solid #c4c4c4; }

/* windows taskbar */
.taskbar { height: 47px; background: #1c1c1c; display: flex; align-items: center; color: #f2f2f2; font-size: 12px; }
.stock { width: 540px; padding-left: 20px; display: flex; align-items: center; gap: 7px; }
.stock-text { display: flex; flex-direction: column; font-size: 11.500px; line-height: 16px; }
.stock-down { color: #f08a8a; }
.slot { width: 44px; height: 40px; display: flex; align-items: center; justify-content: center; position: relative; flex: none; }
.slot-on { background: #2c2c2c; border-radius: 5px; width: 40px; margin: 0 2px; }
.search { width: 220px; height: 32px; margin: 0 2px 0 3px; background: #3a3a3a; border-radius: 16px; display: flex; align-items: center; padding-left: 11px; gap: 11px; color: #d0d0d0; font-size: 13px; position: relative; }
.search-art { position: absolute; right: 6px; top: 1px; }
.apps { display: flex; }
.badge { position: absolute; right: 3px; top: 2px; width: 15px; height: 15px; border-radius: 50%; background: #4a4a4a; color: #ddd; font-size: 10px; line-height: 15px; text-align: center; }
.running { position: absolute; left: 12px; bottom: 1px; width: 16px; height: 3px; border-radius: 2px; background: #8f8f8f; }
.running-dot { position: absolute; left: 19px; bottom: 0; width: 6px; height: 3px; border-radius: 2px; background: #8f8f8f; }
.icon-t { fill: #4b53bc; font: 700 12px "Open Sans", sans-serif; text-anchor: middle; }
.icon-x { fill: #fff; font: 700 10px "Open Sans", sans-serif; text-anchor: middle; }
.linkedin { width: 24px; height: 24px; background: #0a66c2; border-radius: 2px; color: #fff; font: 700 19px/24px "Liberation Sans", sans-serif; text-align: center; }

.tray { display: flex; align-items: center; margin-left: auto; width: 300px; flex: none; }
.tray-chev { margin: 0 6px 0 7px; }
.tray-lang { width: 50px; display: flex; flex-direction: column; align-items: center; font-size: 11.500px; line-height: 16px; }
.tray-ico { width: 24px; }
.tray-first { margin-left: 2px; }
.tray-clock { width: 68px; display: flex; flex-direction: column; align-items: flex-end; font-size: 11px; line-height: 16px; white-space: nowrap; }
.tray-bell { margin: 0 0 0 8px; }
.copilot { position: relative; margin-left: 17px; width: 24px; height: 26px; }
.pre { position: absolute; left: 5px; top: 14px; width: 18px; height: 10px; background: #ffb900; border-radius: 2px; color: #222; font: 700 7.500px/10px "Liberation Sans", sans-serif; text-align: center; }
```
